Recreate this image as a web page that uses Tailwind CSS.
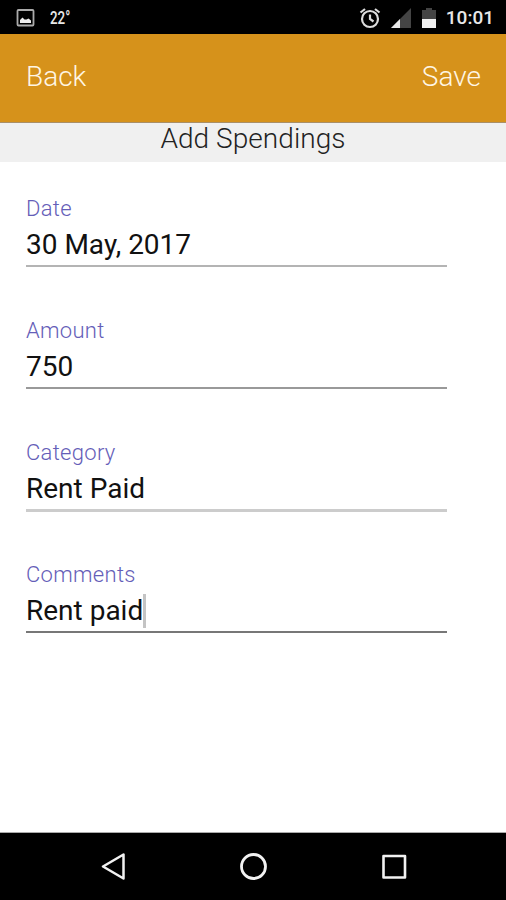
<!DOCTYPE html>
<html lang="en"><head><meta charset="utf-8"><title>Add Spendings</title><script src="https://cdn.jsdelivr.net/npm/@tailwindcss/browser@4"></script></head>
<body class="w-[506px] h-[900px] overflow-hidden bg-white flex flex-col font-['Roboto',sans-serif]">
<header class="h-[34px] bg-black flex items-center text-[#e8e8e8] pt-px">
<svg class="ml-4 shrink-0" width="19" height="18" viewBox="0 0 19 18"><rect x="1.500" y="1" width="16" height="15.500" rx="1" fill="none" stroke="#aaa" stroke-width="1.800"/><path d="M4 14v-3l2.500-2.500 2 2 2 0 2-1 2.500 2v2.500z" fill="#eee"/></svg>
<span class="ml-[15px] w-[21px] text-[18px] leading-none font-medium whitespace-nowrap origin-left scale-x-[0.74]">22°</span>
<svg class="ml-auto mr-px shrink-0" width="22" height="22" viewBox="0 0 22 22" fill="none" stroke="#ddd" stroke-width="2.200"><circle cx="11" cy="12" r="8"/><path d="M11 7.500V12l3.500 2.500M1.500 5.500L6 2M20.500 5.500L16 2"/></svg>
<svg class="ml-[9px] shrink-0" width="20" height="20" viewBox="0 0 20 20"><path d="M0 20L20 0V20z" fill="#444"/><path d="M0 20L9 11V20z" fill="#e8e8e8"/></svg>
<svg class="ml-[11px] mr-px shrink-0" width="14" height="20" viewBox="0 0 14 20"><path d="M0 2h4V0h6v2h4v9H0z" fill="#444"/><path d="M0 11h14v9H0z" fill="#f0f0f0"/></svg>
<span class="ml-[9px] mr-[12px] text-[19px] leading-none font-medium">10:01</span>
</header>
<nav class="h-[89px] bg-[#d6921b] border-b border-[#a98f68] flex justify-between items-center pl-[26px] pr-[25px] pb-[2px] text-[#fff6e5] text-[28px] font-light"><button>Back</button><button>Save</button></nav>
<h1 class="h-[39px] bg-[#f0f0f0] text-center text-[28px] leading-[31px] font-light text-[#222] tracking-[0.05px]">Add Spendings</h1>
<main class="flex-1 px-[26px] pt-[33.600px]">
<label class="block h-[122.300px] w-[421px]"><span class="block text-[22px] leading-[26px] font-light text-[#655eb8] tracking-[0.3px]">Date</span><span class="flex h-[43px] pt-[6px] text-[28px] leading-[34px] text-[#111] whitespace-pre">30 May, 2017</span><span class="block h-[2px] bg-[#b4b4b4]"></span></label>
<label class="block h-[122.300px] w-[421px]"><span class="block text-[22px] leading-[26px] font-light text-[#655eb8] tracking-[0.3px]">Amount</span><span class="flex h-[43px] pt-[6px] text-[28px] leading-[34px] text-[#111]">750</span><span class="block h-[2px] bg-[#999]"></span></label>
<label class="block h-[122.300px] w-[421px]"><span class="block text-[22px] leading-[26px] font-light text-[#655eb8] tracking-[0.3px]">Category</span><span class="flex h-[43px] pt-[6px] text-[28px] leading-[34px] text-[#111]">Rent Paid</span><span class="block h-[3px] bg-[#ccc]"></span></label>
<label class="block h-[122.300px] w-[421px]"><span class="block text-[22px] leading-[26px] font-light text-[#655eb8] tracking-[0.3px]">Comments</span><span class="flex h-[43px] pt-[6px] text-[28px] leading-[34px] text-[#111]">Rent paid<i class="block h-[34px] w-[3px] bg-[#c4c4c4]"></i></span><span class="block h-[1.200px] bg-[#777]"></span></label>
</main>
<footer class="h-[68px] bg-black border-t border-[#aaa] flex justify-between pl-[100px] pr-[99px] pt-[20px]">
<svg width="26" height="27" viewBox="0 0 26 27" fill="none" stroke="#f2f2f2" stroke-width="2.500" stroke-linejoin="round"><path d="M3 13.500L23.500 1.500V25.500z"/></svg>
<svg width="28" height="27" viewBox="0 0 28 27" fill="none" stroke="#f2f2f2" stroke-width="2.800"><circle cx="13.500" cy="13.500" r="12"/></svg>
<svg width="26" height="27" viewBox="0 0 26 27" fill="none" stroke="#f2f2f2" stroke-width="2.600" stroke-linejoin="round"><rect x="2.500" y="3" width="21.500" height="21.500"/></svg>
</footer>
</body></html>
